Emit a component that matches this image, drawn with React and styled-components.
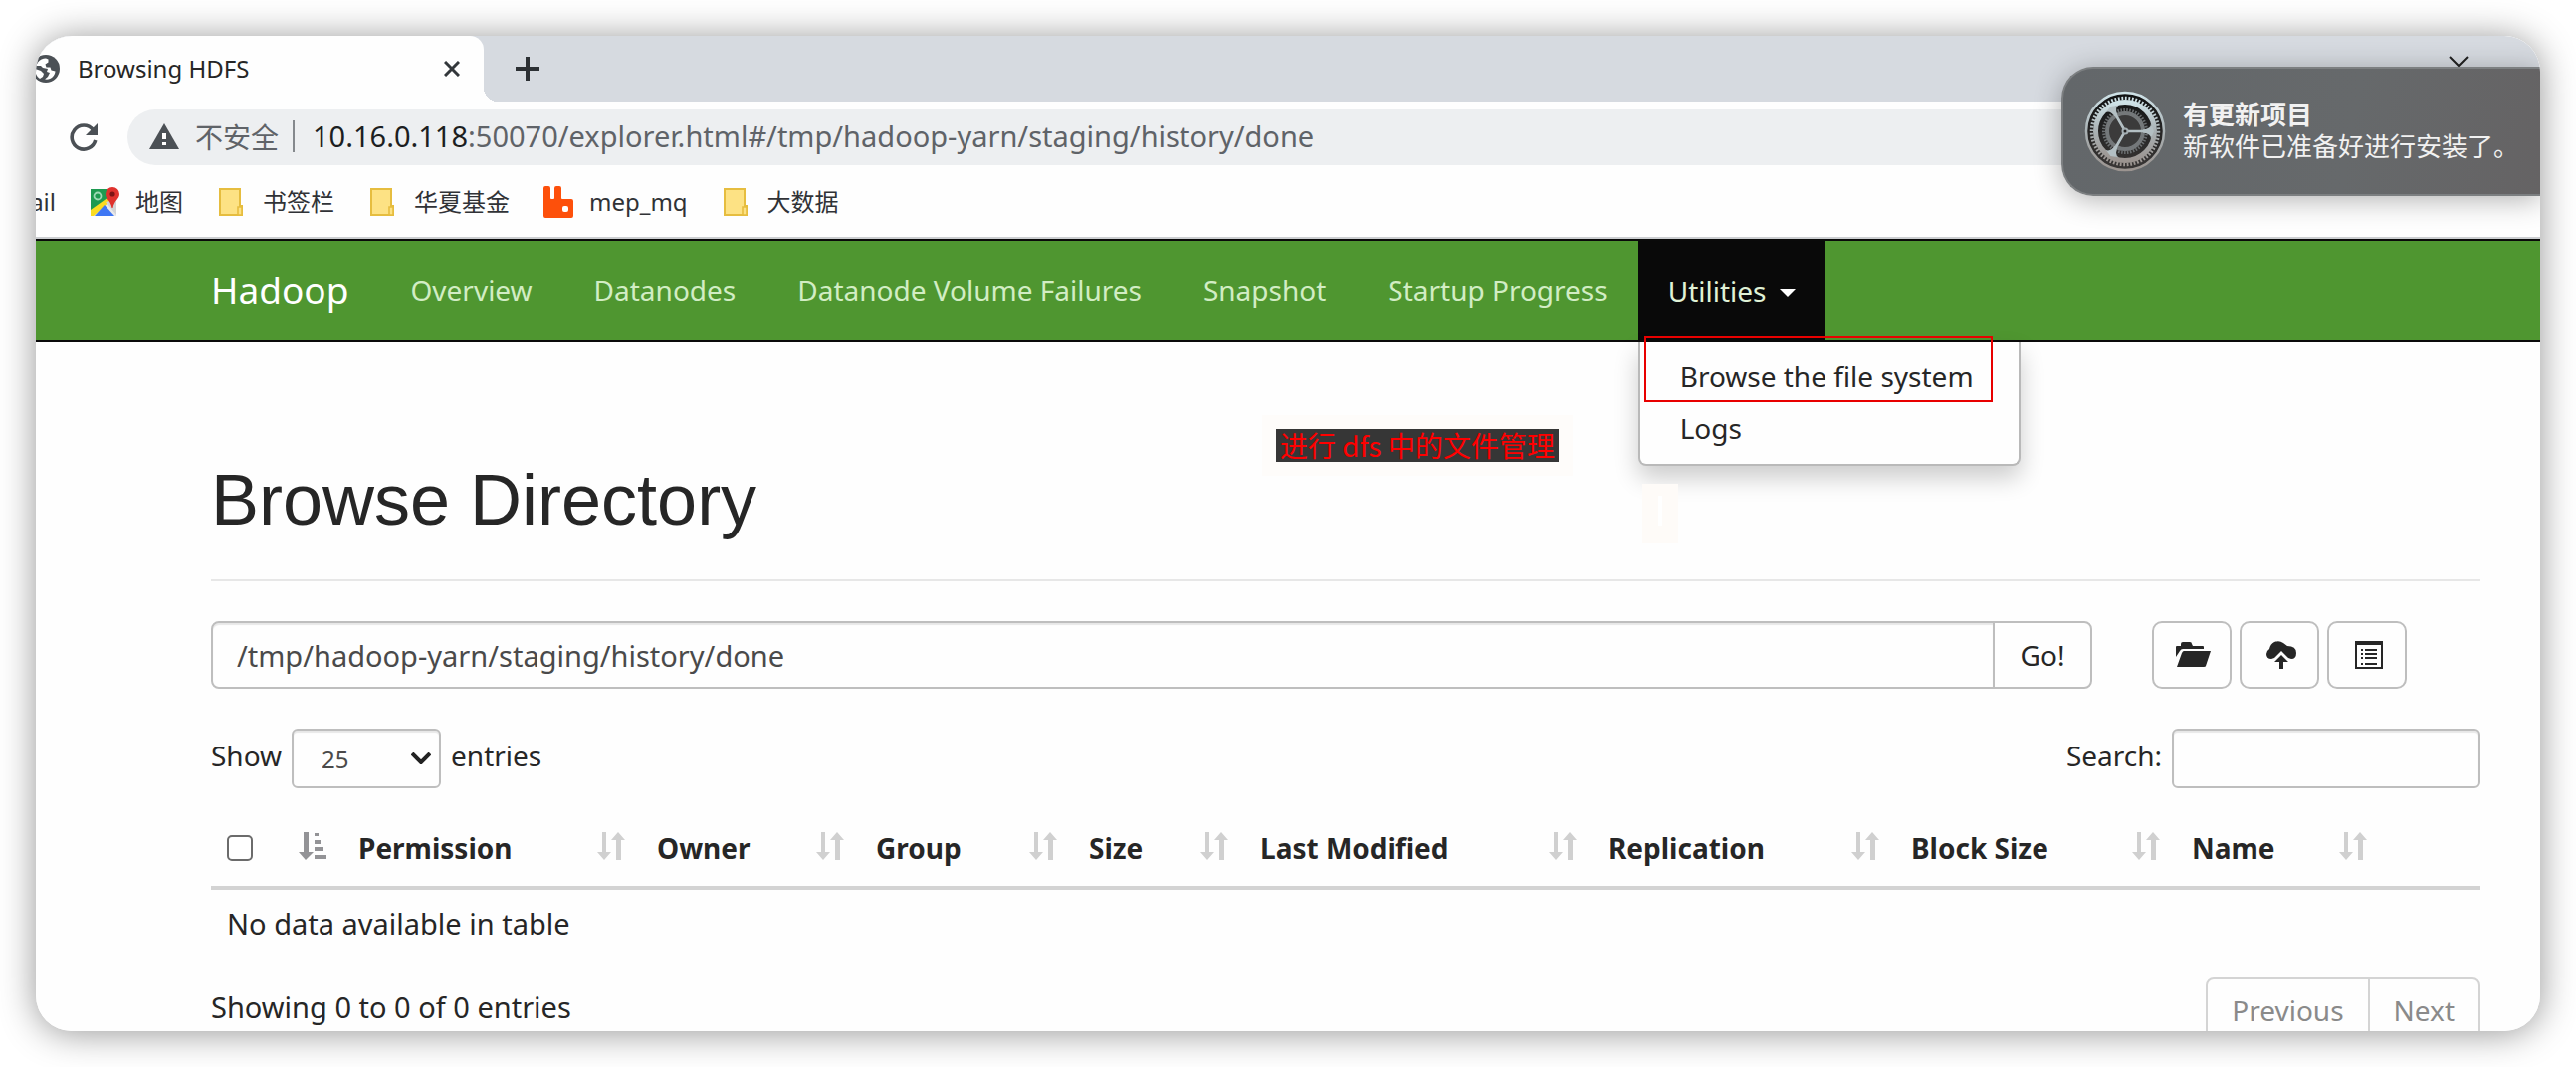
import React from "react";
import styled, { createGlobalStyle } from "styled-components";

const UI_FONT = `"Noto Sans", "Noto Sans CJK SC", sans-serif`;
const CJK_FONT = `"Noto Sans CJK SC", sans-serif`;

const GlobalStyle = createGlobalStyle`
  *, *::before, *::after { box-sizing: border-box; }
  body { margin: 0; background: #fff; }
  button, input, select { font: inherit; color: inherit; margin: 0; }
  svg { display: block; flex: none; }
`;

/* ---------- window frame ---------- */

const Desktop = styled.div`
  padding: 36px;
  font: 28px/40px ${UI_FONT};
  color: #262626;
`;

const Window = styled.div`
  position: relative;
  height: calc(100vh - 72px);
  overflow: hidden;
  border-radius: 36px;
  background: #fefefe;
`;

const Shadow = styled.div`
  border-radius: 36px;
  box-shadow: 0 2px 36px rgba(0, 0, 0, 0.42);
`;

const TabStrip = styled.div`
  display: flex;
  align-items: center;
  justify-content: space-between;
  height: 66px;
  padding-right: 72px;
  background: #d6dae0;
`;

const TabGroup = styled.div`
  display: flex;
  align-items: center;
  gap: 32px;
`;

const Tab = styled.div`
  position: relative;
  display: flex;
  align-items: center;
  width: 450px;
  height: 66px;
  padding-right: 24px;
  gap: 18px;
  border-top-right-radius: 14px;
  background: #fefefe;
  font-size: 24px;

  &::after {
    content: "";
    position: absolute;
    left: 100%;
    bottom: 0;
    width: 14px;
    height: 14px;
    background: radial-gradient(circle at 100% 0, #d6dae0 14px, #fefefe 14px);
  }
`;

const TabTitle = styled.span`
  flex: 1;
`;

const TabIcon = styled.span`
  display: flex;
  justify-content: flex-end;
  width: 24px;
  overflow: hidden;
`;

const IconButton = styled.button`
  display: grid;
  place-items: center;
  padding: 0;
  border: 0;
  background: none;
`;

const Chevron = styled.span`
  display: flex;
  align-self: flex-start;
  padding-top: 20px;
`;

const Toolbar = styled.div`
  display: flex;
  align-items: center;
  gap: 30px;
  padding: 8px 0 8px 34px;
`;

const AddressBar = styled.div`
  display: flex;
  align-items: center;
  flex: 1;
  height: 56px;
  padding: 0 22px 2px;
  border-radius: 28px 0 0 28px;
  background: #edeff1;
  color: #5f6368;
`;

const Insecure = styled.span`
  padding: 0 14px 0 16px;
  font-family: ${CJK_FONT};
`;

const Divider = styled.span`
  width: 2px;
  height: 32px;
  margin-right: 18px;
  background: #85898d;
`;

const Url = styled.span`
  font-size: 29px;

  b {
    color: #1c1e21;
    font-weight: 400;
  }
`;

const Bookmarks = styled.nav`
  display: flex;
  align-items: center;
  gap: 32px;
  height: 66px;
  padding-bottom: 6px;
  font-size: 24px;
  border-bottom: 2px solid #ccced1;
`;

const Bookmark = styled.a`
  display: flex;
  align-items: center;
  gap: 16px;
  color: #303236;
  text-decoration: none;
`;

const ClippedBookmark = styled(Bookmark)`
  justify-content: flex-end;
  width: 20px;
`;

/* ---------- system notification ---------- */

const Notification = styled.aside`
  position: absolute;
  top: 31px;
  right: 0;
  display: flex;
  align-items: center;
  gap: 16px;
  width: 481px;
  height: 130px;
  padding-left: 20px;
  border: 2px solid #7c7f81;
  border-right: 0;
  border-radius: 32px 0 0 32px;
  background: linear-gradient(100deg, #63676a, #66696b 60%, #656364);
  box-shadow: 0 4px 28px rgba(0, 0, 0, 0.3);
  color: #f1f1f1;
  font: 26px/32px ${CJK_FONT};

  p { margin: 0; padding-bottom: 4px; }
  strong { display: block; }
`;

/* ---------- hadoop page ---------- */

const Navbar = styled.nav`
  display: flex;
  height: 104px;
  padding-left: 145px;
  border: solid #0a0a0a;
  border-width: 2px 0;
  background: #4f9630;
  line-height: 98px;
`;

const NavLink = styled.a`
  padding: 0 31px;
  color: ${(p) => (p.$brand ? "#fff" : "#d2edc4")};
  font-size: ${(p) => (p.$brand ? "37px" : "28px")};
  text-decoration: none;
`;

const NavDropdown = styled.div`
  position: relative;
  line-height: 40px;
`;

const NavToggle = styled.button`
  display: flex;
  align-items: center;
  gap: 14px;
  height: 100px;
  padding: 0 30px;
  border: 0;
  background: #090909;
  color: #e0f2d6;
`;

const Caret = styled.span`
  margin-top: 4px;
  border: 8px solid transparent;
  border-top-color: #fff;
  border-bottom: 0;
`;

const Menu = styled.ul`
  position: absolute;
  top: 102px;
  left: 0;
  width: 384px;
  margin: 0;
  padding: 8px 0 10px;
  list-style: none;
  border: 2px solid #b9b9b9;
  border-top: 0;
  border-radius: 0 0 8px 8px;
  background: #fefefe;
  box-shadow: 0 12px 24px rgba(0, 0, 0, 0.2);
`;

const MenuLink = styled.a`
  display: block;
  padding: 6px 40px;
  color: #262626;
  white-space: nowrap;
  text-decoration: none;
`;

const Highlight = styled.li`
  position: absolute;
  top: -6px;
  left: 4px;
  width: 350px;
  height: 66px;
  border: 2px solid #e80000;
`;

const Smudge = styled.li`
  position: absolute;
  top: 142px;
  left: 2px;
  width: 36px;
  height: 60px;
  background: linear-gradient(#fff, #fff) 16px 12px / 4px 30px no-repeat #fefbf8;
`;

const Page = styled.main`
  position: relative;
  padding: 118px 60px 0 176px;
`;

const Note = styled.div`
  position: absolute;
  top: 73px;
  left: 1232px;
  padding: 14px;
  background: #fefcfa;

  span {
    display: block;
    padding: 0 4px;
    background: #363636;
    color: #f00;
    font: 28px/33px ${CJK_FONT};
    white-space: nowrap;
  }
`;

const Title = styled.h1`
  margin: 0;
  padding-bottom: 40px;
  border-bottom: 2px solid #e7e7e7;
  font: 400 72px/80px "Liberation Sans", sans-serif;
`;

const PathRow = styled.form`
  display: flex;
  gap: 60px;
  padding: 40px 74px 40px 0;
`;

const InputGroup = styled.div`
  display: flex;
  flex: 1;
`;

const TextInput = styled.input`
  min-width: 0;
  height: ${(p) => (p.$small ? "60px" : "68px")};
  width: ${(p) => (p.$small ? "310px" : "auto")};
  flex: ${(p) => (p.$small ? "none" : "1")};
  padding: 0 24px;
  border: 2px solid #bebebe;
  border-radius: ${(p) => (p.$small ? "6px" : "8px 0 0 8px")};
  background: #fefefe;
  box-shadow: inset 0 2px 1px rgba(0, 0, 0, 0.09);
  color: #4a4a4a;
  font-size: 29px;
`;

const Button = styled.button`
  display: grid;
  place-items: center;
  height: 68px;
  width: ${(p) => (p.$icon ? "80px" : "100px")};
  margin-left: ${(p) => (p.$icon ? "0" : "-2px")};
  padding: 0 0 0 ${(p) => (p.$icon ? "4px" : "0")};
  border: 2px solid #bebebe;
  border-radius: ${(p) => (p.$icon ? "10px" : "0 8px 8px 0")};
  background: #fefefe;
`;

const ButtonRow = styled.div`
  display: flex;
  gap: 8px;
`;

const Controls = styled.div`
  display: flex;
  justify-content: space-between;
  padding-bottom: 26px;
  line-height: 54px;
`;

const ControlLabel = styled.label`
  display: flex;
  gap: 10px;
`;

const SelectBox = styled.span`
  display: grid;
  align-items: center;
  width: 150px;
  height: 60px;

  > * { grid-area: 1 / 1; }
  svg { justify-self: end; margin-right: 10px; pointer-events: none; }
`;

const Select = styled.select`
  appearance: none;
  width: 100%;
  height: 60px;
  padding: 2px 28px 0;
  border: 2px solid #bebebe;
  border-radius: 6px;
  background: #fefefe;
  box-shadow: inset 0 2px 1px rgba(0, 0, 0, 0.09);
  color: #4a4a4a;
  font-size: 24px;
`;

const Table = styled.table`
  width: 100%;
  table-layout: fixed;
  border-collapse: collapse;
  text-align: left;
`;

const Th = styled.th`
  padding: 14px 16px 18px;
  border-bottom: 4px solid #d3d3d3;
  white-space: nowrap;
`;

const HeadCell = styled.div`
  display: flex;
  align-items: center;
  justify-content: space-between;

  svg { margin-bottom: 4px; }
`;

const Td = styled.td`
  padding: 14px 16px 18px;
  font-size: 29px;
`;

const Checkbox = styled.input`
  appearance: none;
  width: 26px;
  height: 26px;
  border: 2px solid #6b6b6b;
  border-radius: 5px;
  background: #fff;
`;

const Footer = styled.div`
  display: flex;
  justify-content: space-between;
  align-items: flex-start;
  padding-top: 16px;
`;

const Info = styled.p`
  margin: 0;
  padding-top: 10px;
  font-size: 29px;
`;

const Pager = styled.div`
  display: flex;
`;

const PageButton = styled.button`
  height: 68px;
  padding: 0 24px 2px;
  border: 2px solid #d4d4d4;
  background: #fefefe;
  color: #8a8a8a;

  &:first-child { border-radius: 8px 0 0 8px; }
  &:last-child { margin-left: -2px; border-radius: 0 8px 8px 0; }
`;

/* ---------- icons ---------- */

const GlobeIcon = () => (
  <svg width="28" height="28" viewBox="0 0 28 28">
    <circle cx="14" cy="14" r="14" fill="#4b5055" />
    <path d="M14 3.500c-3 0-6 1.500-8 4L4 11l5 0 2 2 5 1-1 3 3 1-2 4-3 2.500c6 1 10-3 10.500-8l-4-1-1-3-4 0-1-3 3-2 0-3z" fill="#fff" />
    <path d="M3 14l6 2 3 3-1 3-3 2C5 22 3 18 3 14z" fill="#fff" />
  </svg>
);

const CrossIcon = () => (
  <svg width="16" height="16" viewBox="0 0 16 16" stroke="#33373b" strokeWidth="3">
    <path d="M1 1l14 14M15 1L1 15" />
  </svg>
);

const PlusIcon = () => (
  <svg width="24" height="24" viewBox="0 0 24 24" stroke="#2c3034" strokeWidth="4">
    <path d="M12 0v24M0 12h24" />
  </svg>
);

const ChevronIcon = ({ width = 20, height = 12, stroke = 2 }) => (
  <svg width={width} height={height} viewBox="0 0 20 12" fill="none" stroke="#222" strokeWidth={stroke}>
    <path d="M1 1l9 9 9-9" />
  </svg>
);

const ReloadIcon = () => (
  <svg width="28" height="28" viewBox="0 0 28 28">
    <path d="M23.500 6.500A12 12 0 1 0 25.800 17" fill="none" stroke="#4b5055" strokeWidth="3.600" />
    <path d="M28 0v12H16z" fill="#4b5055" />
  </svg>
);

const WarningIcon = () => (
  <svg width="30" height="26" viewBox="0 0 30 26">
    <path d="M15 0l15 26H0z" fill="#4b5055" />
    <path d="M13 10h4v6h-4zM13 19h4v3h-4z" fill="#fff" />
  </svg>
);

const MapsIcon = () => (
  <svg width="32" height="32" viewBox="0 0 32 32">
    <path d="M3 3h26v27H3z" fill="#e9e9ea" />
    <path d="M3 3h20v12L3 28z" fill="#1e9a51" />
    <path d="M3 24L24 9v5L6 30H3z" fill="#fbdc22" />
    <path d="M7 30l10-11 10 11z" fill="#3f77f4" />
    <path d="M18 16l11 13V14z" fill="#d3d4d6" />
    <circle cx="10" cy="10" r="3.500" fill="none" stroke="#9ddab5" strokeWidth="1.800" />
    <path d="M25 1a7 7 0 0 1 7 7c0 5-5 6-6.500 14h-1C23 14 18 13 18 8a7 7 0 0 1 7-7z" fill="#df322d" />
    <circle cx="25" cy="8" r="2.600" fill="#7d1414" />
  </svg>
);

const FolderIcon = () => (
  <svg width="32" height="32" viewBox="0 0 32 32">
    <path d="M5 3h20v17h2v9H5z" fill="#fde284" stroke="#e6bd3f" strokeWidth="2" />
    <path d="M23 29v-8h4v8z" fill="#fde284" stroke="#e6bd3f" strokeWidth="1.600" />
  </svg>
);

const RabbitIcon = () => (
  <svg width="32" height="32" viewBox="0 0 32 32">
    <path d="M2 2q0-2 2-2h3q2 0 2 2v10q0 1 1 1h2q1 0 1-1V2q0-2 2-2h3q2 0 2 2v10q0 1 1 1h9q2 0 2 2v15q0 2-2 2H4q-2 0-2-2z" fill="#fd500b" />
    <rect x="21" y="20" width="6" height="6" rx="2" fill="#fff" />
  </svg>
);

const GearBadge = () => (
  <svg width="84" height="84" viewBox="0 0 84 84" fill="none">
    <defs>
      <linearGradient id="metal" x1="0" y1="0" x2="0" y2="1">
        <stop offset="0" stopColor="#cfe3e8" />
        <stop offset="0.5" stopColor="#a9b1b4" />
        <stop offset="1" stopColor="#9b9490" />
      </linearGradient>
      <linearGradient id="well" x1="0" y1="0" x2="0" y2="1">
        <stop offset="0" stopColor="#101213" />
        <stop offset="1" stopColor="#3a3736" />
      </linearGradient>
    </defs>
    <circle cx="42" cy="42" r="39" fill="url(#well)" stroke="url(#metal)" strokeWidth="2.500" />
    <circle cx="42" cy="42" r="21.500" stroke="#6c7072" strokeWidth="3" strokeDasharray="1.500 1.500" />
    <circle cx="42" cy="42" r="18" fill="#3b3b3b" stroke="#74787a" strokeWidth="4" />
    <circle cx="42" cy="42" r="33.500" stroke="url(#metal)" strokeWidth="3.500" strokeDasharray="1.800 1.700" />
    <circle cx="42" cy="42" r="29.500" stroke="url(#metal)" strokeWidth="5" />
    <g stroke="#b3bfc3" strokeWidth="2.600">
      <path d="M42 42h28M42 42L28 17.500M42 42L28 66.500" />
    </g>
    <g fill="#b3bfc3">
      <path d="M60 40.500q8-1 8-6l3 7.500-3 7.500q0-5-8-6z" />
      <path d="M60 40.500q8-1 8-6l3 7.500-3 7.500q0-5-8-6z" transform="rotate(120 42 42)" />
      <path d="M60 40.500q8-1 8-6l3 7.500-3 7.500q0-5-8-6z" transform="rotate(240 42 42)" />
    </g>
    <circle cx="42" cy="42" r="3.500" fill="#a4afb3" />
    <circle cx="42" cy="42" r="1.500" fill="#222" />
  </svg>
);

const OpenFolderIcon = () => (
  <svg width="36" height="28" viewBox="0 0 36 28" fill="#262626">
    <path d="M0 16V6q0-1 1-1h4V3q0-2 2-2h7q2 0 2 2l1 2h10q1 0 1 1v2H7q-2 0-3 2z" />
    <path d="M8 10h27l-5 15q0 1-2 1H1L6 12q1-2 2-2z" />
  </svg>
);

const CloudUploadIcon = () => (
  <svg width="30" height="28" viewBox="0 0 30 28" fill="#262626">
    <path d="M5 18q-5 0-5-5 0-3 3-5 1-5 5-7 5-2 9 1l4 3q9 0 9 7 0 6-5 6l-3-1-7-7-7 7z" />
    <path d="M15 14l7 7h-5v7h-4v-7H8z" />
  </svg>
);

const ListIcon = () => (
  <svg width="28" height="28" viewBox="0 0 28 28" fill="#262626">
    <path d="M0 0h28v28H0zM2 4v22h24V4z" fillRule="evenodd" />
    <path d="M6 8h2v2H6zM10 8h12v2H10zM6 12h2v2H6zM10 12h12v2H10zM6 16h2v2H6zM10 16h12v2H10zM6 22h2v2H6zM10 22h12v2H10z" />
  </svg>
);

const SortIcon = () => (
  <svg width="28" height="28" viewBox="0 0 28 28" fill="#d0d0d0">
    <path d="M5 0h4v20h5l-7 8-7-8h5z" />
    <path d="M19 28h5V8h4l-7-8-7 8h5z" />
  </svg>
);

const SortAscIcon = () => (
  <svg width="28" height="28" viewBox="0 0 28 28" fill="#939396">
    <path d="M5 0h5v20h5l-8 8-7-8h5z" />
    <path d="M16 1h4v3h-4zM16 8h6v4h-6zM16 15h9v4h-9zM16 23h12v4H16z" />
  </svg>
);

/* ---------- data ---------- */

const bookmarks = [
  { label: "地图", icon: <MapsIcon /> },
  { label: "书签栏", icon: <FolderIcon /> },
  { label: "华夏基金", icon: <FolderIcon /> },
  { label: "mep_mq", icon: <RabbitIcon /> },
  { label: "大数据", icon: <FolderIcon /> },
];

const navLinks = ["Overview", "Datanodes", "Datanode Volume Failures", "Snapshot", "Startup Progress"];

const columns = [
  { label: "Permission", width: 300 },
  { label: "Owner", width: 220 },
  { label: "Group", width: 214 },
  { label: "Size", width: 172 },
  { label: "Last Modified", width: 350 },
  { label: "Replication", width: 304 },
  { label: "Block Size", width: 282 },
  { label: "Name", width: 208 },
];

const Col = styled.col`
  width: ${(p) => p.$width}px;
`;

export default function App() {
  return (
    <Desktop>
      <GlobalStyle />
      <Shadow>
        <Window>
          <TabStrip>
            <TabGroup>
              <Tab>
                <TabIcon><GlobeIcon /></TabIcon>
                <TabTitle>Browsing HDFS</TabTitle>
                <IconButton aria-label="Close tab"><CrossIcon /></IconButton>
              </Tab>
              <IconButton aria-label="New tab"><PlusIcon /></IconButton>
            </TabGroup>
            <Chevron><ChevronIcon /></Chevron>
          </TabStrip>

          <Toolbar>
            <IconButton aria-label="Reload"><ReloadIcon /></IconButton>
            <AddressBar>
              <WarningIcon />
              <Insecure>不安全</Insecure>
              <Divider />
              <Url><b>10.16.0.118</b>:50070/explorer.html#/tmp/hadoop-yarn/staging/history/done</Url>
            </AddressBar>
          </Toolbar>

          <Bookmarks>
            <ClippedBookmark href="#mail">ail</ClippedBookmark>
            {bookmarks.map((b) => (
              <Bookmark key={b.label} href="#bookmark">{b.icon}{b.label}</Bookmark>
            ))}
          </Bookmarks>

          <Navbar>
            <NavLink $brand href="#hadoop">Hadoop</NavLink>
            {navLinks.map((label) => (
              <NavLink key={label} href="#nav">{label}</NavLink>
            ))}
            <NavDropdown>
              <NavToggle>Utilities<Caret /></NavToggle>
              <Menu>
                <li><MenuLink href="#explorer">Browse the file system</MenuLink></li>
                <li><MenuLink href="#logs">Logs</MenuLink></li>
                <Highlight aria-hidden="true" />
                <Smudge aria-hidden="true" />
              </Menu>
            </NavDropdown>
          </Navbar>

          <Page>
            <Note><span>进行 dfs 中的文件管理</span></Note>
            <Title>Browse Directory</Title>

            <PathRow onSubmit={(e) => e.preventDefault()}>
              <InputGroup>
                <TextInput aria-label="Directory" defaultValue="/tmp/hadoop-yarn/staging/history/done" />
                <Button>Go!</Button>
              </InputGroup>
              <ButtonRow>
                <Button $icon type="button" aria-label="Create directory"><OpenFolderIcon /></Button>
                <Button $icon type="button" aria-label="Upload files"><CloudUploadIcon /></Button>
                <Button $icon type="button" aria-label="Cut and paste"><ListIcon /></Button>
              </ButtonRow>
            </PathRow>

            <Controls>
              <ControlLabel>
                Show
                <SelectBox>
                  <Select defaultValue="25">
                    <option>25</option>
                    <option>50</option>
                    <option>100</option>
                  </Select>
                  <ChevronIcon width={20} height={12} stroke={4} />
                </SelectBox>
                entries
              </ControlLabel>
              <ControlLabel>
                Search:
                <TextInput $small type="search" />
              </ControlLabel>
            </Controls>

            <Table>
              <colgroup>
                <Col $width={132} />
                {columns.map((c) => <Col key={c.label} $width={c.width} />)}
                <Col $width={98} />
              </colgroup>
              <thead>
                <tr>
                  <Th>
                    <HeadCell>
                      <Checkbox type="checkbox" aria-label="Select all" />
                      <SortAscIcon />
                    </HeadCell>
                  </Th>
                  {columns.map((c) => (
                    <Th key={c.label}>
                      <HeadCell>{c.label}<SortIcon /></HeadCell>
                    </Th>
                  ))}
                  <Th />
                </tr>
              </thead>
              <tbody>
                <tr><Td colSpan={10}>No data available in table</Td></tr>
              </tbody>
            </Table>

            <Footer>
              <Info>Showing 0 to 0 of 0 entries</Info>
              <Pager>
                <PageButton>Previous</PageButton>
                <PageButton>Next</PageButton>
              </Pager>
            </Footer>
          </Page>

          <Notification>
            <GearBadge />
            <p>
              <strong>有更新项目</strong>
              新软件已准备好进行安装了。
            </p>
          </Notification>
        </Window>
      </Shadow>
    </Desktop>
  );
}
